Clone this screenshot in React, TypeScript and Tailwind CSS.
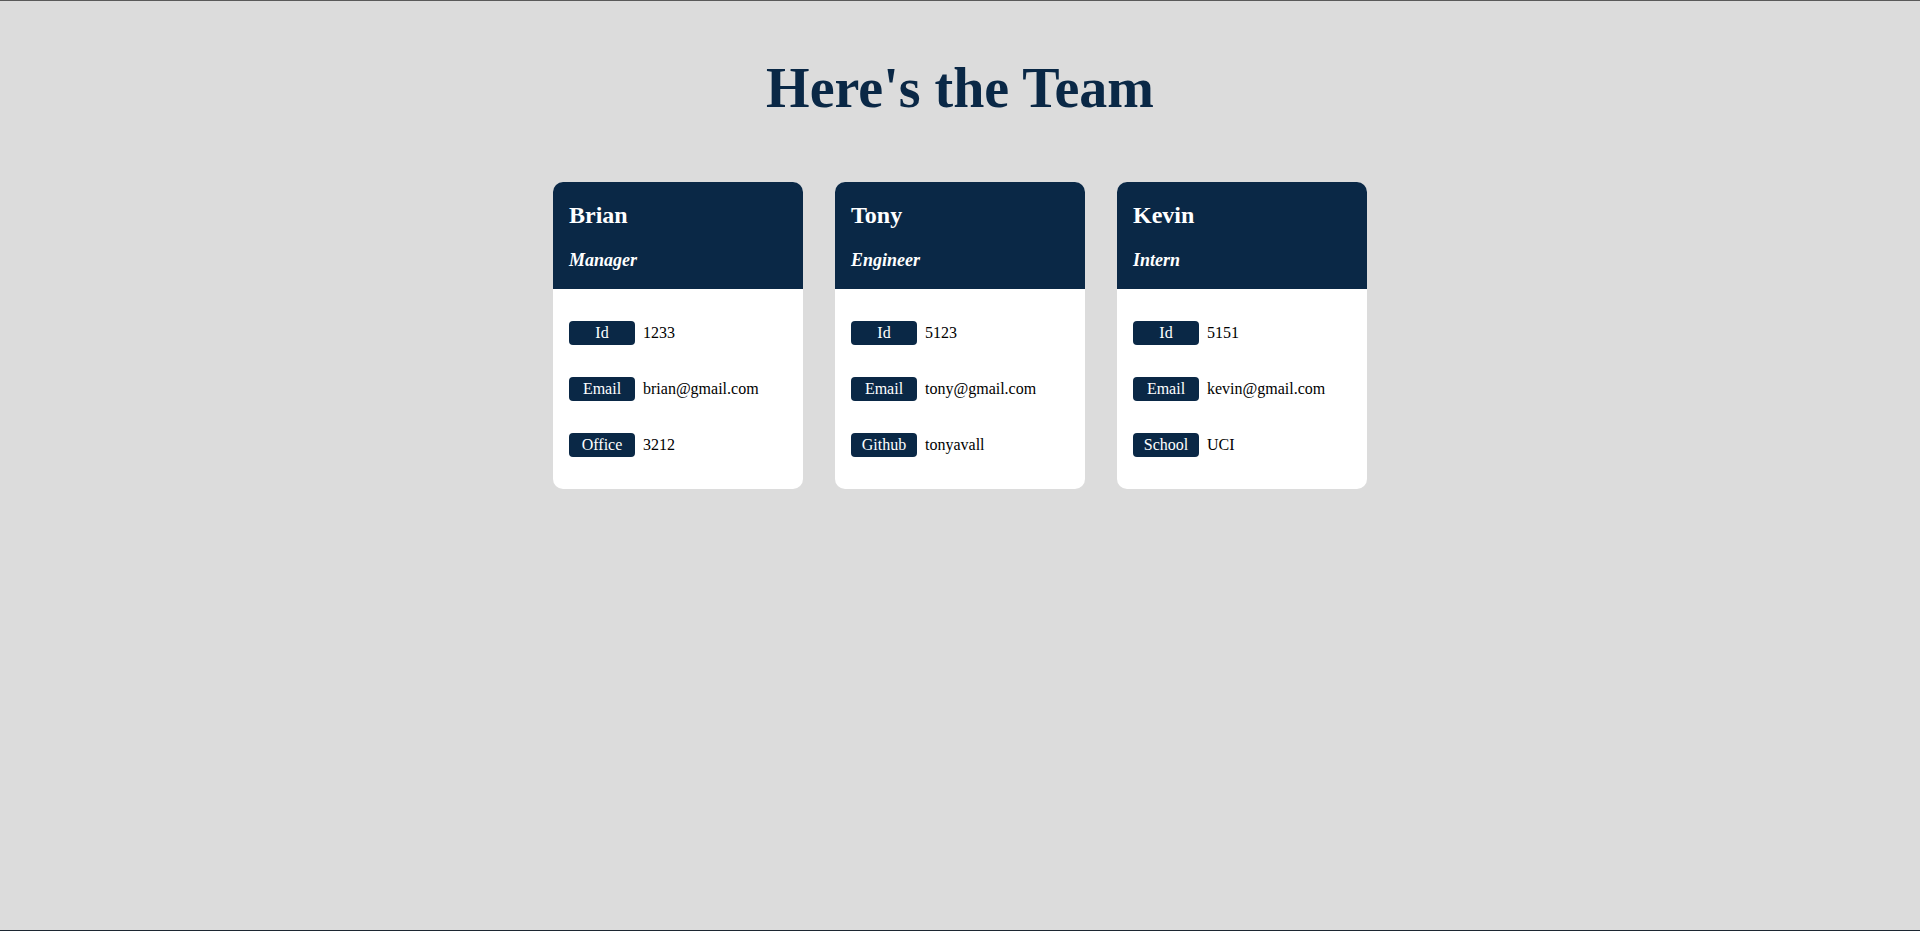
// Team roster page: heading plus one card per employee

const team = [
  {
    name: "Brian",
    role: "Manager",
    rows: [
      { label: "Id", value: "1233" },
      { label: "Email", value: "brian@gmail.com" },
      { label: "Office", value: "3212" },
    ],
  },
  {
    name: "Tony",
    role: "Engineer",
    rows: [
      { label: "Id", value: "5123" },
      { label: "Email", value: "tony@gmail.com" },
      { label: "Github", value: "tonyavall" },
    ],
  },
  {
    name: "Kevin",
    role: "Intern",
    rows: [
      { label: "Id", value: "5151" },
      { label: "Email", value: "kevin@gmail.com" },
      { label: "School", value: "UCI" },
    ],
  },
]

type Member = (typeof team)[number]

function MemberCard({ member }: { member: Member }) {
  return (
    <div className="w-[250px] rounded-[10px] overflow-hidden bg-white">
      {/* card header */}
      <div className="bg-[#0a2846] text-white px-4 pt-[21px] pb-5">
        <h2 className="text-[24px] leading-none font-bold">{member.name}</h2>
        <h3 className="mt-6 text-[18px] leading-none font-bold italic">{member.role}</h3>
      </div>

      {/* card body */}
      <div className="px-4 py-8 flex flex-col gap-8">
        {member.rows.map((row) => (
          <div key={row.label} className="flex items-center gap-2 h-6">
            <span className="w-[66px] h-6 rounded-[4px] bg-[#0a2846] text-white text-[16px] leading-6 text-center">
              {row.label}
            </span>
            <span className="text-[16px] leading-6 text-black">{row.value}</span>
          </div>
        ))}
      </div>
    </div>
  )
}

export default function App() {
  return (
    <div
      className="min-h-screen h-[931px] bg-[#dcdcdc] border-t border-b border-t-[#5a5a5a] border-b-[#1c2631] flex flex-col items-center"
      style={{ fontFamily: '"Liberation Serif", "Times New Roman", serif' }}
    >
      <h1 className="mt-[59px] text-[56px] leading-none font-bold text-[#0a2846]">Here's the Team</h1>

      <div className="mt-[66px] flex gap-8">
        {team.map((m) => (
          <MemberCard key={m.name} member={m} />
        ))}
      </div>
    </div>
  )
}
